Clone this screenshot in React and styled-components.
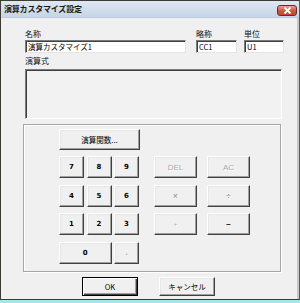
import React from 'react'
import styled, { createGlobalStyle } from 'styled-components'

const GlobalStyle = createGlobalStyle`
  html, body {
    margin: 0;
    padding: 0;
    background: #a9e4ec;
  }
  body {
    font-family: "Noto Sans CJK JP", "Noto Sans", sans-serif;
  }
`

const App = () => {
  const numbers = ['7', '8', '9', '4', '5', '6', '1', '2', '3']
  const ops = [
    { label: 'DEL', dim: true },
    { label: 'AC', dim: true },
    { label: '×', dim: true, sign: true },
    { label: '÷', dim: true, sign: true },
    { label: '+', dim: true, small: true },
    { label: '−', dim: false },
  ]

  return (
    <>
      <GlobalStyle />
      <Window>
        <TitleBar>
          <Title>演算カスタマイズ設定</Title>
          <CloseButton>
            <svg width="9" height="7" viewBox="0 0 9 7">
              <path d="M1.5 0.5 L7.5 6.5 M7.5 0.5 L1.5 6.5" stroke="#fff" strokeWidth="1.8" />
            </svg>
          </CloseButton>
        </TitleBar>

        <Body>
          <FieldRow>
            <Field $w={161}>
              <Label>名称</Label>
              <TextBox>演算カスタマイズ1</TextBox>
            </Field>
            <Field $w={41}>
              <Label>略称</Label>
              <TextBox>CC1</TextBox>
            </Field>
            <Field $w={40}>
              <Label>単位</Label>
              <TextBox>U1</TextBox>
            </Field>
          </FieldRow>

          <FormulaLabel>演算式</FormulaLabel>
          <Formula />

          <Group>
            <FuncButton>演算関数...</FuncButton>
            <Pads>
              <NumPad>
                {numbers.map(n => (
                  <Key key={n}>{n}</Key>
                ))}
                <Key $span={2}>0</Key>
                <Key $dim>.</Key>
              </NumPad>
              <OpPad>
                {ops.map(op => (
                  <OpKey key={op.label} $dim={op.dim} $small={op.small} $sign={op.sign}>
                    {op.label}
                  </OpKey>
                ))}
              </OpPad>
            </Pads>
          </Group>

          <Footer>
            <DialogButton $primary>OK</DialogButton>
            <DialogButton>キャンセル</DialogButton>
          </Footer>
        </Body>
      </Window>
    </>
  )
}

export default App

const Window = styled.div`
  width: 300px;
  height: 300px;
  box-sizing: border-box;
  border: 1px solid #3c3c34;
  border-right-color: #5a5a5a;
  background: #f0f0f0;
  display: flex;
  flex-direction: column;
  box-shadow: inset -2px 0 0 #c8c8c8;
`

const TitleBar = styled.div`
  height: 16px;
  flex-shrink: 0;
  display: flex;
  align-items: center;
  justify-content: space-between;
  padding: 0 2px 0 3px;
  background: linear-gradient(#dfe8f2, #c6d5e7);
  border-bottom: 1px solid #b9c8da;
`

const Title = styled.span`
  font-size: 8px;
  line-height: 10px;
  font-weight: 700;
  color: #1a1a1a;
  letter-spacing: -0.2px;
`

const CloseButton = styled.div`
  width: 20px;
  height: 11px;
  margin-top: 2px;
  box-sizing: border-box;
  border: 1px solid #6b2a22;
  border-radius: 3px;
  background: linear-gradient(#e3a392, #c9553d 55%, #c24a33);
  display: flex;
  align-items: center;
  justify-content: center;
`

const Body = styled.div`
  flex: 1;
  display: flex;
  flex-direction: column;
  padding-top: 11px;
`

const FieldRow = styled.div`
  display: flex;
  margin-left: 24px;
  gap: 10px;

  & > :last-child {
    margin-left: -3px;
  }
`

const Field = styled.div`
  width: ${p => p.$w}px;
  display: flex;
  flex-direction: column;
  gap: 1px;
`

const Label = styled.div`
  font-size: 8px;
  line-height: 10px;
  color: #111;
`

const TextBox = styled.div`
  height: 13px;
  box-sizing: border-box;
  background: #fff;
  border: 1px solid;
  border-color: #7a7a7a #e4e4e4 #e4e4e4 #7a7a7a;
  box-shadow: inset 1px 1px 0 #404040;
  font-size: 7.5px;
  line-height: 11px;
  padding-left: 2px;
  color: #000;
  white-space: nowrap;
  overflow: hidden;
`

const FormulaLabel = styled(Label)`
  margin: 3px 0 0 24px;
`

const Formula = styled.div`
  margin: 3px 0 0 24px;
  width: 257px;
  height: 50px;
  box-sizing: border-box;
  background: #f2f2f2;
  border: 1px solid;
  border-color: #7a7a7a #fff #fff #7a7a7a;
  box-shadow: inset 1px 1px 0 #404040;
`

const Group = styled.div`
  margin: 5px 0 0 22px;
  width: 258px;
  height: 148px;
  box-sizing: border-box;
  border: 1px solid #a6a6a6;
  box-shadow: 1px 1px 0 #fff, inset 1px 1px 0 #fff;
  padding: 4px 0 0 35px;
  display: flex;
  flex-direction: column;
  gap: 6px;
`

const raised = `
  box-sizing: border-box;
  background: #f0f0f0;
  border: 1px solid;
  border-color: #fff #404040 #404040 #fff;
  box-shadow: inset -1px -1px 0 #a0a0a0, inset 1px 1px 0 #e6e6e6;
  display: flex;
  align-items: center;
  justify-content: center;
  font-family: "Noto Sans CJK JP", "Noto Sans", sans-serif;
  color: #000;
  white-space: nowrap;
`

const FuncButton = styled.div`
  ${raised}
  width: 81px;
  height: 21px;
  font-size: 7.5px;
`

const Pads = styled.div`
  display: flex;
  gap: 15px;
`

const NumPad = styled.div`
  display: grid;
  grid-template-columns: repeat(3, 25px);
  grid-auto-rows: 22px;
  column-gap: 2.5px;
  row-gap: 6.5px;
`

const Key = styled.div`
  ${raised}
  grid-column: span ${p => p.$span || 1};
  font-family: "DejaVu Sans", sans-serif;
  font-size: 7px;
  font-weight: 700;
  color: ${p => (p.$dim ? '#b0b0b0' : '#000')};
`

const OpPad = styled.div`
  display: grid;
  grid-template-columns: repeat(2, 43px);
  grid-auto-rows: 22px;
  column-gap: 10px;
  row-gap: 6.5px;
`

const OpKey = styled.div`
  ${raised}
  font-family: "Liberation Sans", sans-serif;
  font-size: ${p => (p.$small ? '5px' : p.$sign ? '9px' : '8px')};
  font-weight: ${p => (p.$dim ? 400 : 700)};
  color: ${p => (p.$sign ? '#8c8c8c' : p.$dim ? '#a8a8a8' : '#222')};
  text-shadow: ${p => (p.$dim ? '1px 1px 0 #fff' : 'none')};
`

const Footer = styled.div`
  display: flex;
  gap: 21px;
  margin: 5px 0 0 81px;
`

const DialogButton = styled.div`
  ${raised}
  width: 56px;
  height: 19px;
  font-size: 7.5px;
  ${p =>
    p.$primary &&
    `
    border: 1px solid #000;
    box-shadow: inset 1px 1px 0 #fff, inset -1px -1px 0 #404040, inset -2px -2px 0 #a0a0a0;
  `}
`
